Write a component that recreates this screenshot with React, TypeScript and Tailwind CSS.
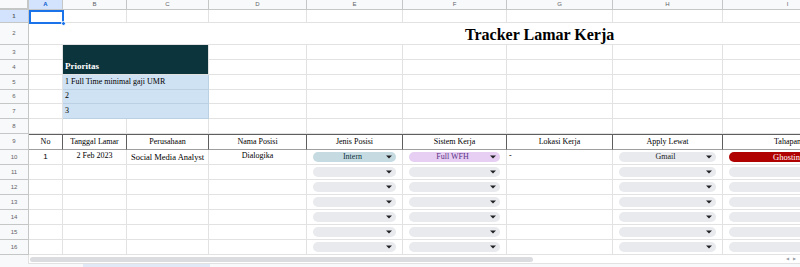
import React from 'react';

// lebar kolom A..I (px), ditulis lengkap supaya tailwind bisa baca
const W = ['w-[34px]', 'w-[64px]', 'w-[82px]', 'w-[98px]', 'w-[96px]', 'w-[104px]', 'w-[106px]', 'w-[110px]', 'w-[130px]'];
const LETTERS = ['A', 'B', 'C', 'D', 'E', 'F', 'G', 'H', 'I'];

function RowHead({ n, active, h }: { n: number; active?: boolean; h: string }) {
  return (
    <div
      className={`${h} w-[29px] shrink-0 flex items-center justify-center border-r border-b border-[#c4c7c5] text-[6px] text-[#5f6368] font-['Liberation_Sans',sans-serif] ${
        active ? 'bg-[#d3e3fd] text-[#0b57d0] font-bold' : 'bg-[#f8f9fa]'
      }`}
    >
      {n}
    </div>
  );
}

function Cell({ w, className = '', children }: { w: string; className?: string; children?: React.ReactNode }) {
  return <div className={`${w} shrink-0 border-r border-b border-[#e2e2e2] overflow-hidden ${className}`}>{children}</div>;
}

function Arrow() {
  return (
    <svg width="6" height="4" viewBox="0 0 6 4" className="shrink-0">
      <path d="M0 0.5h6L3 3.5z" fill="#202124" />
    </svg>
  );
}

function Chip({ label, tone = 'grey' }: { label?: string; tone?: 'grey' | 'teal' | 'purple' }) {
  const tones = {
    grey: 'bg-[#e8eaed] text-[#202124]',
    teal: 'bg-[#c6dbe1] text-[#0c343d]',
    purple: 'bg-[#e6cff2] text-[#5a3286]',
  };
  return (
    <div className={`h-[10px] mx-[6px] mt-[2px] rounded-full flex items-center pl-[6px] pr-[4px] ${tones[tone]}`}>
      <span className="flex-1 text-center text-[8px] leading-none truncate">{label}</span>
      <Arrow />
    </div>
  );
}

const serif = "font-['Liberation_Serif',serif]";

export default function App() {
  const emptyRows = [11, 12, 13, 14, 15, 16];
  const headers = ['No', 'Tanggal Lamar', 'Perusahaan', 'Nama Posisi', 'Jenis Posisi', 'Sistem Kerja', 'Lokasi Kerja', 'Apply Lewat', 'Tahapan'];

  return (
    <div className={`w-[800px] h-[267px] overflow-hidden bg-white relative ${serif} text-black`}>
      {/* huruf kolom */}
      <div className="flex h-[10px]">
        <div className="w-[29px] shrink-0 bg-[#f8f9fa] border-r-2 border-b-2 border-[#c4c7c5]" />
        {LETTERS.map((l, i) => (
          <div
            key={l}
            className={`${W[i]} shrink-0 flex items-center justify-center border-r border-b border-[#c4c7c5] text-[6px] font-['Liberation_Sans',sans-serif] ${
              i === 0 ? 'bg-[#d3e3fd] text-[#0b57d0] font-bold' : 'bg-[#f8f9fa] text-[#5f6368]'
            }`}
          >
            {l}
          </div>
        ))}
      </div>

      {/* baris 1 */}
      <div className="flex h-[13px]">
        <RowHead n={1} active h="h-[13px]" />
        {W.map((w, i) => (
          <Cell key={i} w={w} />
        ))}
      </div>

      {/* baris 2 - judul */}
      <div className="flex h-[22px]">
        <RowHead n={2} h="h-[22px]" />
        <div className="flex-1 border-b border-[#e2e2e2] flex items-center pl-[436px] pt-[2px]">
          <span className="text-[16px] font-bold whitespace-nowrap">Tracker Lamar Kerja</span>
        </div>
      </div>

      {/* baris 3-4 prioritas */}
      <div className="flex h-[30px]">
        <div className="flex flex-col">
          <RowHead n={3} h="h-[15px]" />
          <RowHead n={4} h="h-[15px]" />
        </div>
        <div className="flex flex-col">
          <Cell w={W[0]} className="h-[15px]" />
          <Cell w={W[0]} className="h-[15px]" />
        </div>
        <div className="w-[146px] shrink-0 bg-[#0c343d] border-r border-b border-[#e2e2e2] flex items-end pl-[2px] pb-[1px]">
          <span className="text-[9px] font-bold text-white">Prioritas</span>
        </div>
        {W.slice(3).map((w, i) => (
          <div key={i} className="flex flex-col">
            <Cell w={w} className="h-[15px]" />
            <Cell w={w} className="h-[15px]" />
          </div>
        ))}
      </div>

      {/* baris 5-7 */}
      {[
        { n: 5, t: '1 Full Time minimal gaji UMR', h: 'h-[15px]' },
        { n: 6, t: '2', h: 'h-[14px]' },
        { n: 7, t: '3', h: 'h-[15px]' },
      ].map((r) => (
        <div key={r.n} className={`flex ${r.h}`}>
          <RowHead n={r.n} h={r.h} />
          <Cell w={W[0]} />
          <div className="w-[146px] shrink-0 bg-[#cfe2f3] border-r border-b border-[#bcd0e3] flex items-end pl-[2px] pb-[1px]">
            <span className="text-[8px] whitespace-nowrap">{r.t}</span>
          </div>
          {W.slice(3).map((w, i) => (
            <Cell key={i} w={w} />
          ))}
        </div>
      ))}

      {/* baris 8 */}
      <div className="flex h-[15px]">
        <RowHead n={8} h="h-[15px]" />
        {W.map((w, i) => (
          <Cell key={i} w={w} />
        ))}
      </div>

      {/* baris 9 - header tabel */}
      <div className="flex h-[16px]">
        <RowHead n={9} h="h-[16px]" />
        {headers.map((t, i) => (
          <div
            key={t}
            className={`${W[i]} shrink-0 h-[16px] border-t border-r border-b border-t-[#5f5f5f] border-r-[#5f5f5f] border-b-[#9e9e9e] flex items-end justify-center pb-[1px] overflow-hidden`}
          >
            <span className="text-[8px] whitespace-nowrap">{t}</span>
          </div>
        ))}
      </div>

      {/* baris 10 */}
      <div className="flex h-[15px]">
        <RowHead n={10} h="h-[15px]" />
        <Cell w={W[0]} className="flex items-end justify-center pb-[1px]">
          <span className="text-[8px] font-['Liberation_Sans',sans-serif]">1</span>
        </Cell>
        <Cell w={W[1]} className="flex items-end justify-center pb-[2px]">
          <span className="text-[8px] whitespace-nowrap">2 Feb 2023</span>
        </Cell>
        <Cell w={W[2]} className="flex items-end justify-center">
          <span className="text-[8.5px] whitespace-nowrap">Social Media Analyst</span>
        </Cell>
        <Cell w={W[3]} className="flex items-end justify-center pb-[2px]">
          <span className="text-[8px] whitespace-nowrap">Dialogika</span>
        </Cell>
        <Cell w={W[4]}>
          <Chip label="Intern" tone="teal" />
        </Cell>
        <Cell w={W[5]}>
          <Chip label="Full WFH" tone="purple" />
        </Cell>
        <Cell w={W[6]} className="flex items-end pl-[2px] pb-[2px]">
          <span className="text-[8px]">-</span>
        </Cell>
        <Cell w={W[7]}>
          <Chip label="Gmail" />
        </Cell>
        <Cell w={W[8]}>
          <div className="h-[10px] ml-[6px] mt-[2px] rounded-l-full bg-[#b10202] text-white flex items-center pl-[44px]">
            <span className="text-[8.5px] leading-none whitespace-nowrap">Ghosting</span>
          </div>
        </Cell>
      </div>

      {/* baris 11-16 */}
      {emptyRows.map((n) => (
        <div key={n} className="flex h-[15px]">
          <RowHead n={n} h="h-[15px]" />
          {W.map((w, i) => (
            <Cell key={i} w={w}>
              {(i === 4 || i === 5 || i === 7) && <Chip />}
              {i === 8 && <div className="h-[10px] ml-[6px] mt-[2px] rounded-l-full bg-[#e8eaed]" />}
            </Cell>
          ))}
        </div>
      ))}

      {/* scrollbar horizontal */}
      <div className="flex h-[9px]">
        <div className="w-[29px] shrink-0 bg-[#f8f9fa] border-r border-[#e2e2e2]" />
        <div className="flex-1 bg-white border-b border-[#e2e2e2] flex items-center pl-[1px] pr-[4px] gap-[4px]">
          <div className="w-[503px] h-[5px] rounded-full bg-[#dadce0]" />
          <div className="flex-1" />
          <span className="text-[4px] text-[#9aa0a6] font-['Liberation_Sans',sans-serif]">◀</span>
          <span className="text-[4px] text-[#9aa0a6] font-['Liberation_Sans',sans-serif]">▶</span>
        </div>
      </div>

      {/* tab sheet bawah */}
      <div className="flex h-[5px] bg-[#f8f9fa]">
        <div className="w-[83px] shrink-0" />
        <div className="w-[127px] bg-[#e1e9f7]" />
      </div>

      {/* sel A1 aktif */}
      <div className="absolute left-[29px] top-[10px] w-[35px] h-[14px] border-2 border-[#1a73e8] pointer-events-none" />
      <div className="absolute left-[61px] top-[21px] w-[5px] h-[5px] rounded-full bg-[#1a73e8] border border-white" />
    </div>
  );
}
